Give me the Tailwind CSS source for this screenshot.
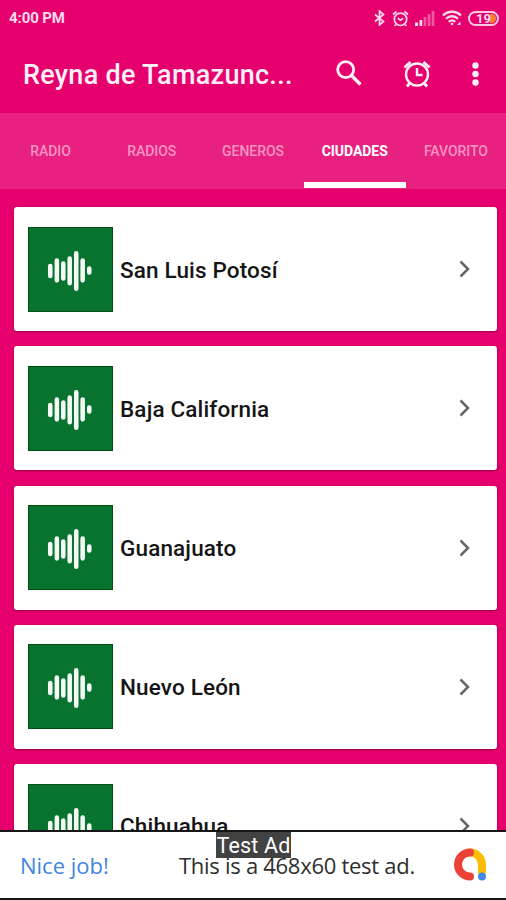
<!DOCTYPE html>
<html lang="es">
<head>
  <meta charset="UTF-8">
  <meta name="viewport" content="width=device-width, initial-scale=1.0">
  <title>Reyna de Tamazunchale</title>
  <script src="https://cdn.jsdelivr.net/npm/@tailwindcss/browser@4"></script>
</head>
<body class="h-[900px] overflow-hidden bg-[#e5006d] font-['Roboto',sans-serif]">
  <!-- shared icons -->
  <svg class="hidden">
    <symbol id="wave" viewBox="0 0 84 84">
      <g stroke="#f4fbf4" stroke-width="4.6" stroke-linecap="round">
        <path d="M21.500 38.500v10M28.200 33v20M34.700 36v15M41.200 31v25M47.800 25.500v36M54.300 33v20M61 41v4"/>
      </g>
    </symbol>
    <symbol id="chevron" viewBox="0 0 12 18">
      <path d="M1.500 1.500L9 9L1.500 16.500" fill="none" stroke="#666" stroke-width="2.500"/>
    </symbol>
    <symbol id="alarm" viewBox="0 0 28 28">
      <g fill="none" stroke="currentColor">
        <circle cx="14" cy="14.500" r="11" stroke-width="2.400"/>
        <path d="M14 8v7h5.500" stroke-width="2.400"/>
        <path d="M1.500 7.500L7.500 2M26.500 7.500L20.500 2M7 23l-3 3.500M21 23l3 3.500" stroke-width="2.800"/>
      </g>
    </symbol>
  </svg>

  <div class="flex h-full flex-col">
    <!-- status bar -->
    <div class="flex h-[36px] shrink-0 items-center pl-[9px] pr-[7px] text-[#ffd9ec]">
      <span class="flex-1 text-[15px] font-bold leading-none tracking-[-0.1px]">4:00 PM</span>
      <svg class="mr-[7px] h-[16px] w-[11px]" viewBox="0 0 11 16" fill="none" stroke="currentColor" stroke-width="1.700"><path d="M1 4.500l8.500 7L5.500 15V1l4 3.500L1 11.500"/></svg>
      <svg class="mr-[6px] h-[17px] w-[17px]" viewBox="0 0 17 17" fill="none" stroke="currentColor" stroke-width="1.700"><circle cx="8.500" cy="9.300" r="6.200"/><path d="M1 4.500l3.500-3M16 4.500l-3.500-3M5.800 8.200l2.700 2 2.700-2M4 14.500l-1.500 1.500M13 14.500l1.500 1.500"/></svg>
      <svg class="mr-[7px] h-[15px] w-[20px]" viewBox="0 0 20 15" fill="currentColor"><path d="M0 11.500h3V15H0zM4.500 9h2.700v6H4.500z"/><path d="M8.600 6h2.700v9H8.600zM12.700 3h2.700v12h-2.700zM16.700 0h2.700v15h-2.700z" opacity=".4"/></svg>
      <svg class="mr-[6px] h-[16px] w-[20px]" viewBox="0 0 20 16" fill="none" stroke="currentColor" stroke-width="2.300"><path d="M1 5.500c5-5 13-5 18 0M4 8.800c3.500-3.400 8.500-3.400 12 0M6.800 11.800c2-1.800 4.400-1.800 6.400 0"/><circle cx="10" cy="14" r="1.300" fill="currentColor" stroke="none"/><path d="M15 15h3.500v-3.500z" fill="currentColor" stroke="none"/></svg>
      <div class="relative flex h-[15px] w-[31px] items-center justify-center overflow-hidden rounded-full border-2 border-[#ffc9e2]">
        <div class="absolute right-[1px] top-[1px] h-[9px] w-[6px] rounded-r-full bg-[#f58235]"></div>
        <span class="relative text-[13px] font-bold leading-none">19</span>
      </div>
    </div>

    <!-- toolbar -->
    <div class="flex h-[77px] shrink-0 items-center pl-[23px] text-[#fff0f8]">
      <h1 class="w-[313px] whitespace-nowrap pt-[2px] text-[27px] font-medium leading-none tracking-[0.280px]">Reyna de Tamazunc...</h1>
      <svg class="-mt-[3px] h-[26px] w-[26px]" viewBox="0 0 26 26" fill="none" stroke="currentColor"><circle cx="9.700" cy="9.700" r="8" stroke-width="2.800"/><path d="M15.500 15.500l9 9" stroke-width="3.400"/></svg>
      <svg class="-mt-[2px] ml-[41px] h-[28px] w-[28px]"><use href="#alarm"/></svg>
      <svg class="-mt-[2px] ml-[41px] h-[24px] w-[7px]" viewBox="0 0 7 24" fill="currentColor"><circle cx="3.500" cy="3.500" r="3.200"/><circle cx="3.500" cy="12" r="3.200"/><circle cx="3.500" cy="20.500" r="3.200"/></svg>
    </div>

    <!-- tabs -->
    <nav class="grid h-[76px] shrink-0 grid-cols-5 bg-[#e82180] text-center text-[14px] font-medium leading-[76px] tracking-[-0.050px] text-[#f893c5]">
      <a>RADIO</a>
      <a>RADIOS</a>
      <a>GENEROS</a>
      <a class="flex flex-col text-white"><span class="h-[69px] pl-px font-bold tracking-[-0.050px]">CIUDADES</span><span class="h-[6px] w-[102px] bg-white"></span></a>
      <a class="pl-px">FAVORITO</a>
    </nav>

    <!-- city list -->
    <main class="flex min-h-0 flex-1 flex-col gap-[15.250px] overflow-hidden pl-[14px] pr-[9px] pt-[18px]">
      <div class="flex h-[124px] shrink-0 items-center rounded-[3px] bg-white pl-[14px] pr-[26px] shadow-[0_1px_2px_rgba(90,0,50,0.6)]">
        <svg class="h-[85px] w-[85px] border border-[#02500f] bg-[#08732f]"><use href="#wave"/></svg>
        <span class="flex-1 pl-[7px] pt-[3px] text-[22.500px] font-medium tracking-[0.150px] text-[#151515]">San Luis Potosí</span>
        <svg class="h-[18px] w-[12px]"><use href="#chevron"/></svg>
      </div>
      <div class="flex h-[124px] shrink-0 items-center rounded-[3px] bg-white pl-[14px] pr-[26px] shadow-[0_1px_2px_rgba(90,0,50,0.6)]">
        <svg class="h-[85px] w-[85px] border border-[#02500f] bg-[#08732f]"><use href="#wave"/></svg>
        <span class="flex-1 pl-[7px] pt-[3px] text-[22.500px] font-medium tracking-[0.150px] text-[#151515]">Baja California</span>
        <svg class="h-[18px] w-[12px]"><use href="#chevron"/></svg>
      </div>
      <div class="flex h-[124px] shrink-0 items-center rounded-[3px] bg-white pl-[14px] pr-[26px] shadow-[0_1px_2px_rgba(90,0,50,0.6)]">
        <svg class="h-[85px] w-[85px] border border-[#02500f] bg-[#08732f]"><use href="#wave"/></svg>
        <span class="flex-1 pl-[7px] pt-[2px] text-[22.500px] font-medium tracking-[0.150px] text-[#151515]">Guanajuato</span>
        <svg class="h-[18px] w-[12px]"><use href="#chevron"/></svg>
      </div>
      <div class="flex h-[124px] shrink-0 items-center rounded-[3px] bg-white pl-[14px] pr-[26px] shadow-[0_1px_2px_rgba(90,0,50,0.6)]">
        <svg class="h-[85px] w-[85px] border border-[#02500f] bg-[#08732f]"><use href="#wave"/></svg>
        <span class="flex-1 pl-[7px] pt-[2px] text-[22.500px] font-medium tracking-[0.150px] text-[#151515]">Nuevo León</span>
        <svg class="h-[18px] w-[12px]"><use href="#chevron"/></svg>
      </div>
      <div class="flex h-[124px] shrink-0 items-center rounded-[3px] bg-white pl-[14px] pr-[26px] shadow-[0_1px_2px_rgba(90,0,50,0.6)]">
        <svg class="h-[85px] w-[85px] border border-[#02500f] bg-[#08732f]"><use href="#wave"/></svg>
        <span class="flex-1 pl-[7px] pt-[2px] text-[22.500px] font-medium tracking-[0.150px] text-[#151515]">Chihuahua</span>
        <svg class="h-[18px] w-[12px]"><use href="#chevron"/></svg>
      </div>
    </main>

    <!-- ad banner -->
    <footer class="relative flex h-[70px] shrink-0 items-center border-y-2 border-[#161616] bg-white pl-[20px] pr-[18px]">
      <span class="w-[159px] whitespace-nowrap font-['Open_Sans',sans-serif] text-[22px] font-medium text-[#3f86e0]">Nice job!</span>
      <span class="flex-1 whitespace-nowrap font-['Open_Sans',sans-serif] text-[22px] tracking-[-0.280px] text-[#2e2e2e]">This is a 468x60 test ad.</span>
      <svg class="h-[34px] w-[34px]" viewBox="0 0 34 34" fill="none" stroke-width="8">
        <path d="M15 4.500h1a12 12 0 0 1 12 12v9" stroke="#fbbc04"/>
        <path d="M16 4.500a12 12 0 1 0 0 24" stroke="#ea4335" stroke-linecap="round"/>
        <circle cx="28" cy="28.500" r="4" fill="#4285f4"/>
      </svg>
      <div class="absolute left-[216px] top-0 h-[26px] w-[75px] bg-[#424242] text-center font-['Roboto',sans-serif] text-[21.500px] leading-[28px] tracking-[0.200px] text-white">Test Ad</div>
    </footer>
  </div>
</body>
</html>
